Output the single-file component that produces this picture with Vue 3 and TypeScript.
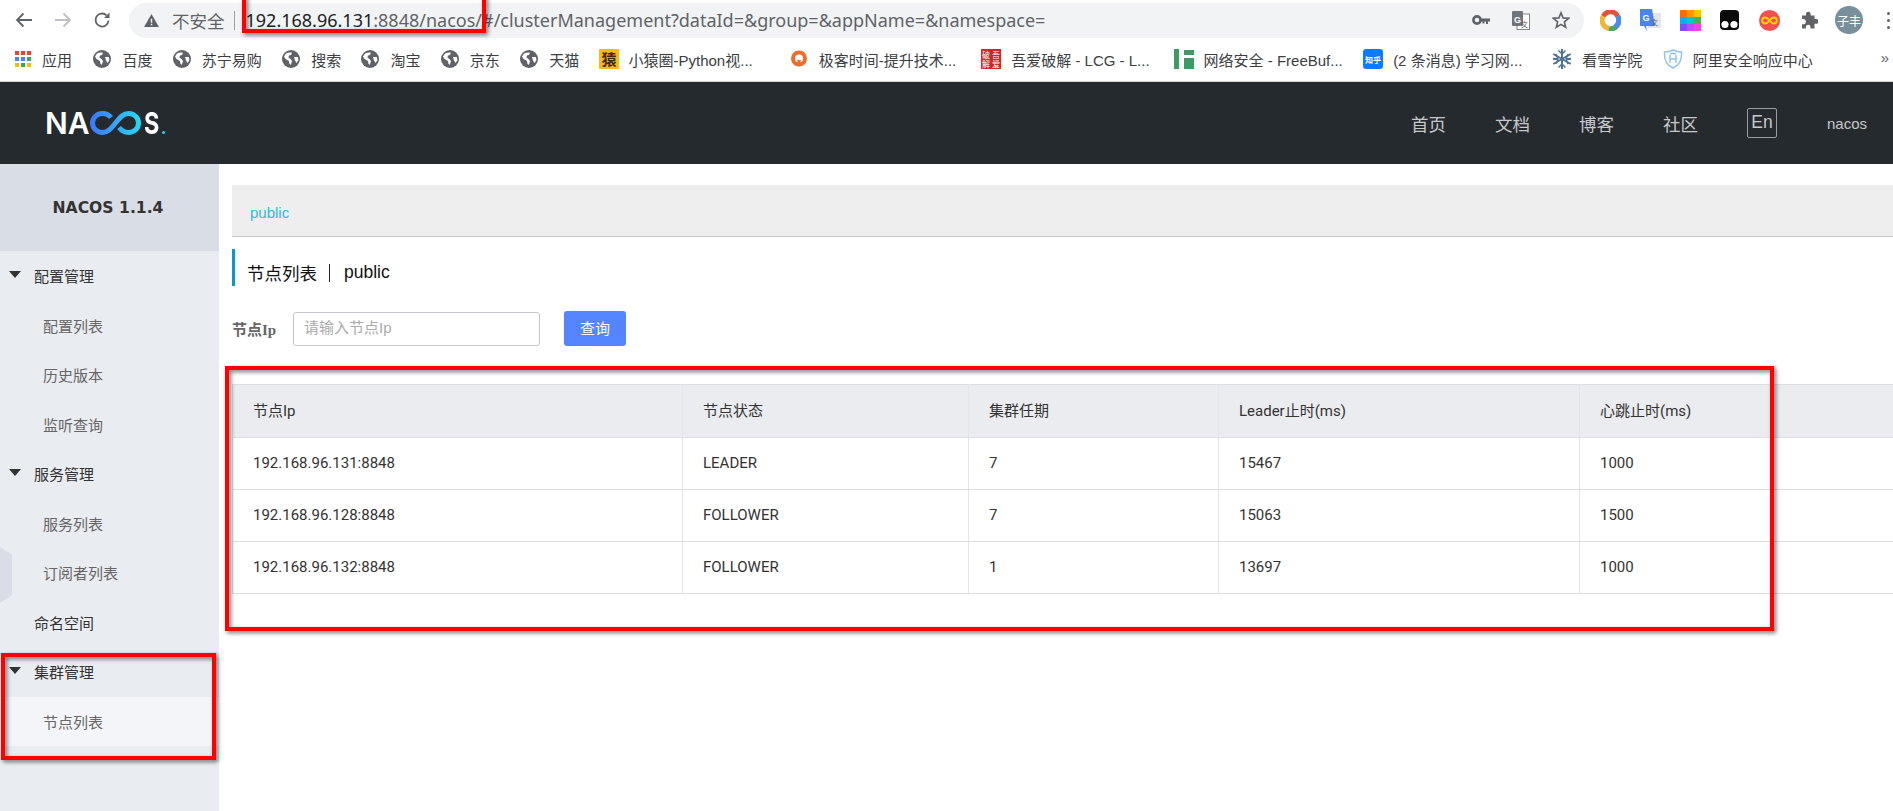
<script setup lang="ts">
interface Bookmark { label: string; icon: string; cls?: string }
const bookmarks: Bookmark[] = [
  { label: '应用', icon: 'apps', cls: 'first' },
  { label: '百度', icon: 'globe' },
  { label: '苏宁易购', icon: 'globe' },
  { label: '搜索', icon: 'globe' },
  { label: '淘宝', icon: 'globe' },
  { label: '京东', icon: 'globe' },
  { label: '天猫', icon: 'globe', cls: 'tight' },
  { label: '小猿圈-Python视...', icon: 'yuan', cls: 'wide' },
  { label: '极客时间-提升技术...', icon: 'geek', cls: 'mid' },
  { label: '吾爱破解 - LCG - L...', icon: 'wuai', cls: 'mid2' },
  { label: '网络安全 - FreeBuf...', icon: 'free' },
  { label: '(2 条消息) 学习网...', icon: 'zhihu', cls: 'wider' },
  { label: '看雪学院', icon: 'snow' },
  { label: '阿里安全响应中心', icon: 'shield' },
]
const navLinks = ['首页', '文档', '博客', '社区']
const apps = ['#ea4335', '#ea4335', '#ea4335', '#4285f4', '#4285f4', '#34a853', '#fbbc04', '#34a853', '#fbbc04']
const palette = ['#ff6d00', '#ff9800', '#ffc400', '#00b0ff', '#00c8c8', '#4caf50', '#7c4dff', '#c04df0', '#ff40e0']
const menu = [
  { label: '配置管理', kind: 'group' },
  { label: '配置列表', kind: 'sub' },
  { label: '历史版本', kind: 'sub' },
  { label: '监听查询', kind: 'sub' },
  { label: '服务管理', kind: 'group' },
  { label: '服务列表', kind: 'sub' },
  { label: '订阅者列表', kind: 'sub' },
  { label: '命名空间', kind: 'plain' },
  { label: '集群管理', kind: 'group' },
  { label: '节点列表', kind: 'sub active' },
]
const columns = ['节点Ip', '节点状态', '集群任期', 'Leader止时(ms)', '心跳止时(ms)']
const rows = [
  ['192.168.96.131:8848', 'LEADER', '7', '15467', '1000'],
  ['192.168.96.128:8848', 'FOLLOWER', '7', '15063', '1500'],
  ['192.168.96.132:8848', 'FOLLOWER', '1', '13697', '1000'],
]
</script>

<template>
  <div class="page">
    <div class="chrome">
      <div class="toolbar">
        <svg class="nav-ico" viewBox="0 0 18 18" fill="none" stroke="#5f6368" stroke-width="1.8"><path d="M17 9H2M8.5 2.5 2 9l6.5 6.5" /></svg>
        <svg class="nav-ico" viewBox="0 0 18 18" fill="none" stroke="#bdc1c6" stroke-width="1.8"><path d="M1 9h15M9.5 2.5 16 9l-6.500 6.500" /></svg>
        <svg class="nav-ico" viewBox="0 0 18 18" fill="none" stroke="#5f6368" stroke-width="1.8"><path d="M15.500 9.500A6.500 6.500 0 1 1 13.600 4.400" /><path d="M16.500 1.500v5.500H11z" fill="#5f6368" stroke="none" /></svg>
        <div class="omnibox">
          <svg class="warn" viewBox="0 0 16 14"><path d="M8 0 16 14H0z" fill="#5f6368" /><path d="M7.200 5h1.600v4.500H7.200zM7.200 10.500h1.600v1.600H7.200z" fill="#f1f3f4" /></svg>
          <span class="insecure">不安全</span>
          <span class="omni-div"></span>
          <span class="url"><span class="host">192.168.96.131</span>:8848/nacos/#/clusterManagement?dataId=&amp;group=&amp;appName=&amp;namespace=</span>
          <div class="omni-icons">
            <span class="cell"><svg width="18" height="12" viewBox="0 0 18 12"><circle cx="5" cy="6" r="3.600" fill="none" stroke="#5f6368" stroke-width="2.600" /><path d="M8 4.600h10v3h-2v2.400h-2V7.600h-1.500v1.800h-2V7.600H8z" fill="#5f6368" /></svg></span>
            <span class="cell"><svg width="18" height="19" viewBox="0 0 18 19"><rect x="5" y="3" width="12.500" height="15.500" fill="#fff" stroke="#80868b" /><rect x="0" y="0" width="11" height="15" rx="1" fill="#70757a" /><text x="5.500" y="11.500" class="svg-g">G</text><text x="9" y="15.500" class="svg-w">文</text></svg></span>
            <span class="cell"><svg width="18" height="18" viewBox="0 0 18 18"><path d="M9 1.800 11.100 6.900l5.500.4-4.200 3.600 1.300 5.400L9 13.400l-4.700 2.900 1.300-5.400L1.400 7.300l5.500-.4z" fill="none" stroke="#5f6368" stroke-width="1.600" /></svg></span>
          </div>
        </div>
        <div class="exts">
          <span class="cell"><svg width="21" height="21" viewBox="0 0 21 21" fill="none" stroke-width="5"><path d="M3.300 6.300A8 8 0 0 1 17.700 6.300" stroke="#e8503a" /><path d="M3.300 6.300A8 8 0 0 0 9 18.400" stroke="#f2b632" /><path d="M17.700 6.300A8 8 0 0 1 9 18.400" stroke="#4ca95b" /><path d="M17.700 6.300A8 8 0 0 1 15 17" stroke="#4a8af4" /></svg></span>
          <span class="cell"><svg width="21" height="23" viewBox="0 0 21 23"><rect x="8" y="4" width="13" height="15" fill="#e3e5e8" /><path d="M0 0h12l3 17H6l1 5-3-5H0z" fill="#4a86e8" /><text x="6" y="11.500" class="svg-g">G</text><text x="14.500" y="16" class="svg-t">文</text></svg></span>
          <span class="cell"><span class="palette"><i v-for="(c, i) in palette" :key="i" :style="{ background: c }"></i></span></span>
          <span class="cell"><svg width="19" height="20" viewBox="0 0 19 20"><rect width="19" height="20" rx="4" fill="#0a0a0a" /><circle cx="5" cy="14.500" r="3.600" fill="#fff" /><circle cx="14" cy="14.500" r="3.600" fill="#fff" /></svg></span>
          <span class="cell"><svg width="21" height="21" viewBox="0 0 21 21"><circle cx="10.500" cy="10.500" r="10.500" fill="#f44f4f" /><path d="M10.500 10.500c-1.500-2-2.800-3-4.300-3a3 3 0 0 0 0 6c1.500 0 2.800-1 4.300-3s2.800-3 4.300-3a3 3 0 0 1 0 6c-1.500 0-2.800-1-4.300-3z" fill="none" stroke="#ffd600" stroke-width="1.800" /></svg></span>
          <span class="cell"><svg width="18" height="18" viewBox="0 0 18 18"><path d="M2 4.500h4V3a2.300 2.300 0 0 1 4.600 0v1.500H14.500V8H16a2.400 2.400 0 0 1 0 4.800h-1.500V17.500H10.500V16a2.300 2.300 0 0 0-4.600 0v1.500H2v-4.200h1.200a2.600 2.600 0 0 0 0-5.200H2z" fill="#5f6368" /></svg></span>
          <span class="cell"><span class="avatar">子丰</span></span>
          <span class="cell"><span class="dots"><i></i><i></i><i></i></span></span>
        </div>
      </div>

      <div class="bookmarks">
        <div v-for="b in bookmarks" :key="b.label" class="bm" :class="b.cls">
          <span v-if="b.icon === 'apps'" class="apps"><i v-for="(c, i) in apps" :key="i" :style="{ background: c }"></i></span>
          <svg v-else-if="b.icon === 'globe'" class="fav" viewBox="0 0 18 18"><circle cx="9" cy="9" r="9" fill="#5f6368" /><path d="M4 3.500c2-1 4-1 6-.8l-1 2.300-2 .5-.6 2L8.500 9l1.500 2-1.200 4-1.500-1.500L7 11 3.500 9 2 6.500zM12 7h3.800l.7 3-2 3-1.500-2.500z" fill="#fff" /></svg>
          <svg v-else-if="b.icon === 'yuan'" class="fav big" viewBox="0 0 20 20"><rect width="20" height="20" rx="1" fill="#fdb913" /><text x="10" y="16" class="svg-y">猿</text></svg>
          <svg v-else-if="b.icon === 'geek'" class="fav" viewBox="0 0 18 18"><circle cx="9" cy="8.500" r="6" fill="none" stroke="#ee6c2c" stroke-width="4" /><path d="M7 10h4l-2 7z" fill="#ee6c2c" /></svg>
          <svg v-else-if="b.icon === 'wuai'" class="fav big" viewBox="0 0 20 20"><rect width="20" height="20" fill="#d8232a" /><text x="5" y="8.500" class="svg-r">破</text><text x="15" y="8.500" class="svg-r">吾</text><text x="5" y="18" class="svg-r">解</text><text x="15" y="18" class="svg-r">爱</text></svg>
          <svg v-else-if="b.icon === 'free'" class="fav big" viewBox="0 0 20 20"><rect x="0" y="0" width="5" height="20" fill="#3d9b63" /><rect x="10" y="1" width="10" height="5" fill="#3d9b63" /><rect x="10" y="9" width="10" height="11" fill="#3d9b63" /></svg>
          <svg v-else-if="b.icon === 'zhihu'" class="fav big" viewBox="0 0 20 20"><rect width="20" height="20" rx="3" fill="#0a7cff" /><text x="10" y="13.500" class="svg-z">知乎</text></svg>
          <svg v-else-if="b.icon === 'snow'" class="fav big" viewBox="0 0 20 20" fill="none" stroke="#4f7590" stroke-width="2"><path d="M10 0v20M1.300 5l17.400 10M18.700 5 1.300 15" /><path d="M6.500 1.500 10 5l3.500-3.500M6.500 18.500 10 15l3.500 3.500M1 9.500 5.800 10.500 4 15M19 9.500 14.200 10.500 16 15M1 10.500 5.800 9.500 4 5M19 10.500 14.200 9.500 16 5" stroke-width="1.500" /></svg>
          <svg v-else class="fav big" viewBox="0 0 20 20" fill="none" stroke="#8cc2ee" stroke-width="1.400"><path d="M10 1c3 1.500 5.500 2 8.500 2 .5 7-1.500 13-8.500 16C3 16 1 10 1.500 3 4.500 3 7 2.500 10 1z" /><path d="M7 6v8M13 6v8M7 10h6M7 5c2-1 4-1 6 0" /></svg>
          <span class="bm-text">{{ b.label }}</span>
        </div>
        <span class="more">»</span>
      </div>
    </div>

    <header class="topbar">
      <div class="logo">
        <span class="logo-text">NA</span>
        <svg class="logo-loop" viewBox="0 0 51 24" fill="none">
          <defs>
            <linearGradient id="lg" x1="0" y1="0" x2="1" y2="0">
              <stop offset="0" stop-color="#3a7bff" />
              <stop offset="0.55" stop-color="#35a9f5" />
              <stop offset="1" stop-color="#22d8f2" />
            </linearGradient>
          </defs>
          <path d="M21 6.500C18.500 3.500 15.500 2.500 12.500 2.500 7 2.500 2.500 6.700 2.500 12S7 21.500 12.500 21.500C18 21.500 21 17.500 25.500 12 30 6.500 33 2.500 38.500 2.500 44 2.500 48.500 6.700 48.500 12S44 21.500 38.500 21.500C34 21.500 31 19 29 16.500" stroke="url(#lg)" stroke-width="5" />
        </svg>
        <span class="logo-text logo-s">S</span><span class="logo-dot"></span>
      </div>
      <nav class="top-nav">
        <a v-for="n in navLinks" :key="n" class="top-link">{{ n }}</a>
        <span class="lang">En</span>
        <span class="user">nacos</span>
      </nav>
    </header>

    <div class="body">
      <aside class="sidebar">
        <div class="side-title">NACOS 1.1.4</div>
        <div v-for="m in menu" :key="m.label" class="menu-row" :class="m.kind">
          <span v-if="m.kind === 'group'" class="tri"></span>
          {{ m.label }}
        </div>
        <span class="hex"></span>
      </aside>

      <main class="main">
        <div class="crumb">public</div>
        <div class="title"><span>节点列表</span><span class="title-bar"></span><span>public</span></div>
        <div class="filter">
          <label class="filter-label">节点Ip</label>
          <div class="input">请输入节点Ip</div>
          <button class="btn">查询</button>
        </div>
        <table class="table">
          <colgroup><col class="c1" /><col class="c2" /><col class="c3" /><col class="c4" /><col /></colgroup>
          <thead><tr><th v-for="c in columns" :key="c">{{ c }}</th></tr></thead>
          <tbody>
            <tr v-for="r in rows" :key="r[0]"><td v-for="(v, i) in r" :key="i">{{ v }}</td></tr>
          </tbody>
        </table>
      </main>
    </div>

    <div class="mark mark-url"></div>
    <div class="mark mark-table"></div>
    <div class="mark mark-side"></div>
  </div>
</template>

<style>
html, body { margin: 0; height: 811px; overflow: hidden; background: #fff; }
</style>

<style scoped>
.page { position: relative; width: 1893px; height: 811px; overflow: hidden; display: flex; flex-direction: column; font-family: "Liberation Sans", "Noto Sans CJK SC", sans-serif; font-size: 15px; color: #333; }
.chrome { height: 82px; flex: none; background: #fff; }
.toolbar { height: 40px; display: flex; align-items: center; padding-left: 15px; box-sizing: border-box; }
.nav-ico { width: 18px; height: 18px; margin-right: 21px; flex: none; }
.nav-ico:nth-child(3) { margin-right: 18px; }
.omnibox { width: 1455px; height: 35px; flex: none; background: #f1f3f4; border-radius: 18px; display: flex; align-items: center; padding: 0 3px 0 15px; box-sizing: border-box; }
.warn { width: 15px; height: 13px; flex: none; }
.insecure { margin-left: 13px; font-size: 17.500px; color: #5f6368; white-space: nowrap; }
.omni-div { width: 1px; height: 19px; background: #9aa0a6; margin: 0 11px 0 9px; flex: none; }
.url { font-family: "Noto Sans", "Liberation Sans", sans-serif; font-size: 18px; color: #5f6368; white-space: nowrap; }
.host { color: #202124; }
.omni-icons { margin-left: auto; display: flex; }
.cell { width: 40px; height: 24px; flex: none; display: flex; align-items: center; justify-content: center; }
.svg-g { font: bold 9px "Liberation Sans", sans-serif; fill: #fff; text-anchor: middle; }
.svg-w { font: 7px "Noto Sans CJK SC", sans-serif; fill: #5f6368; }
.svg-t { font: 7px "Noto Sans CJK SC", sans-serif; fill: #5f6368; text-anchor: middle; }
.exts { display: flex; margin-left: 7px; }
.exts .cell { width: 39.700px; height: 30px; }
.palette { width: 21px; height: 21px; display: grid; grid-template-columns: repeat(3, 7px); grid-auto-rows: 7px; }
.avatar { width: 28px; height: 28px; border-radius: 50%; background: #78909c; color: #fff; font-size: 12px; display: flex; align-items: center; justify-content: center; flex: none; }
.dots { display: flex; flex-direction: column; gap: 4px; }
.dots i { width: 3px; height: 3px; border-radius: 50%; background: #5f6368; display: block; }

.bookmarks { height: 42px; box-sizing: border-box; border-bottom: 1px solid #d4d6d9; display: flex; align-items: center; padding: 0 0 3px 15px; position: relative; }
.bm { display: flex; align-items: center; margin-right: 20.350px; flex: none; }
.bm.first { margin-right: 21.400px; }
.bm.tight { margin-right: 19.300px; }
.bm.wide { margin-right: 37px; }
.bm.mid { margin-right: 25px; }
.bm.mid2 { margin-right: 24px; }
.bm.wider { margin-right: 30px; }
.bm-text { margin-left: 11px; font-size: 15px; color: #3c4043; white-space: nowrap; }
.fav { width: 18px; height: 18px; flex: none; }
.fav.big { width: 20px; height: 20px; }
.fav.big + .bm-text { margin-left: 10px; }
.apps { width: 16px; height: 16px; display: grid; grid-template-columns: repeat(3, 4px); grid-auto-rows: 4px; gap: 2px; flex: none; }
.apps i, .palette i { display: block; }
.svg-y { font: bold 15px "Noto Sans CJK SC", sans-serif; fill: #3a2a10; text-anchor: middle; }
.svg-r { font: 8px "Noto Sans CJK SC", sans-serif; fill: #fff; text-anchor: middle; }
.svg-z { font: bold 8px "Noto Sans CJK SC", sans-serif; fill: #fff; text-anchor: middle; }
.more { position: absolute; right: 4px; top: 9px; font-size: 15px; color: #5f6368; }

.topbar { height: 82px; flex: none; background: #252a2f; display: flex; align-items: center; justify-content: space-between; padding: 0 26px 0 45px; box-sizing: border-box; }
.logo { display: flex; align-items: center; height: 24px; }
.logo-text { font-family: Inter, sans-serif; font-weight: 600; font-size: 30px; line-height: 24px; color: #fff; }
.logo-s { width: 15px; margin-left: 3px; font-weight: 700; transform: scaleX(.78); transform-origin: left center; }
.logo-loop { width: 51px; height: 24px; flex: none; }
.logo-dot { width: 3.500px; height: 3.500px; background: #2dd4e8; border-radius: 50%; align-self: flex-end; margin-left: 3px; margin-bottom: 1px; }
.top-nav { display: flex; align-items: center; }
.top-link { font-size: 17.500px; color: #c6c8ca; margin-right: 49px; white-space: nowrap; }
.lang { width: 30px; height: 30px; box-sizing: border-box; border: 1px solid #9a9da0; border-radius: 2px; color: #c6c8ca; font-size: 17.500px; display: flex; justify-content: center; padding-top: 2px; line-height: 22px; margin-right: 50px; }
.user { font-size: 15px; color: #c6c8ca; }

.body { flex: 1; display: flex; min-height: 0; }
.sidebar { width: 219px; flex: none; background: #e9ecf1; position: relative; }
.side-title { height: 87px; background: #d9dde5; display: flex; align-items: center; justify-content: center; font-weight: 700; font-size: 15.600px; font-family: "DejaVu Sans", sans-serif; color: #333; padding-right: 3px; box-sizing: border-box; }
.menu-row { height: 49.500px; display: flex; align-items: center; padding-left: 34px; position: relative; box-sizing: border-box; color: #333; }
.menu-row.sub { padding-left: 43px; color: #666; }
.menu-row.active { background: #f3f5f8; }
.tri { position: absolute; left: 9px; top: 20px; width: 0; height: 0; border-left: 6px solid transparent; border-right: 6px solid transparent; border-top: 7px solid #333; }
.hex { position: absolute; left: 0; top: 383px; width: 12px; height: 56px; background: #d9dde5; clip-path: polygon(0 0, 100% 14%, 100% 86%, 0 100%); }

.main { flex: 1; min-width: 0; padding: 21px 0 0 13px; }
.crumb { height: 52px; box-sizing: border-box; background: #eee; border-bottom: 1px solid #c8c8c8; padding: 19px 0 0 18px; line-height: 17px; font-size: 15px; color: #2cbcdc; }
.title { margin-top: 12px; height: 37px; box-sizing: border-box; border-left: 3px solid #0b9ac4; padding: 10px 0 0 12px; display: flex; align-items: center; font-size: 17.500px; color: #111; }
.title-bar { width: 1px; height: 18px; background: #222; margin: 0 14px 0 12px; }
.filter { margin-top: 25px; height: 35px; display: flex; align-items: center; }
.filter-label { width: 61px; font-family: "Liberation Serif", "Noto Sans CJK SC", serif; font-weight: 700; color: #666; font-size: 15px; }
.input { width: 247px; height: 34px; box-sizing: border-box; border: 1px solid #c4c6cf; border-radius: 3px; background: #fff; color: #aaa; line-height: 30px; padding-left: 10px; }
.btn { margin-left: 24px; width: 62px; height: 35px; border: 0; border-radius: 3px; background: #5584ff; color: #fff; font: inherit; padding: 0 0 2px; }
.table { margin-top: 38px; width: 1661px; border-collapse: collapse; table-layout: fixed; color: #333; font-family: Roboto, "Noto Sans CJK SC", sans-serif; }
.c1 { width: 450px; }
.c2 { width: 286px; }
.c3 { width: 250px; }
.c4 { width: 361px; }
.table th, .table td { height: 52px; padding: 0 0 1px 20px; text-align: left; font-weight: 400; border: 1px solid #dcdee3; border-top: 0; border-right: 1px solid #e3e5ea; box-sizing: border-box; white-space: nowrap; }
.table th { height: 53px; padding-bottom: 3px; background: #ebecf0; border-top: 1px solid #dcdee3; }
.table tr :last-child { border-right: 0; }

.mark { position: absolute; box-sizing: border-box; border: 4px solid #f00; filter: drop-shadow(2px 2px 2px rgba(0, 0, 0, .55)); }
.mark-url { left: 242px; top: -10px; width: 244px; height: 43px; }
.mark-table { left: 225px; top: 366px; width: 1549px; height: 265px; }
.mark-side { left: 1px; top: 653px; width: 215px; height: 107px; }
</style>
